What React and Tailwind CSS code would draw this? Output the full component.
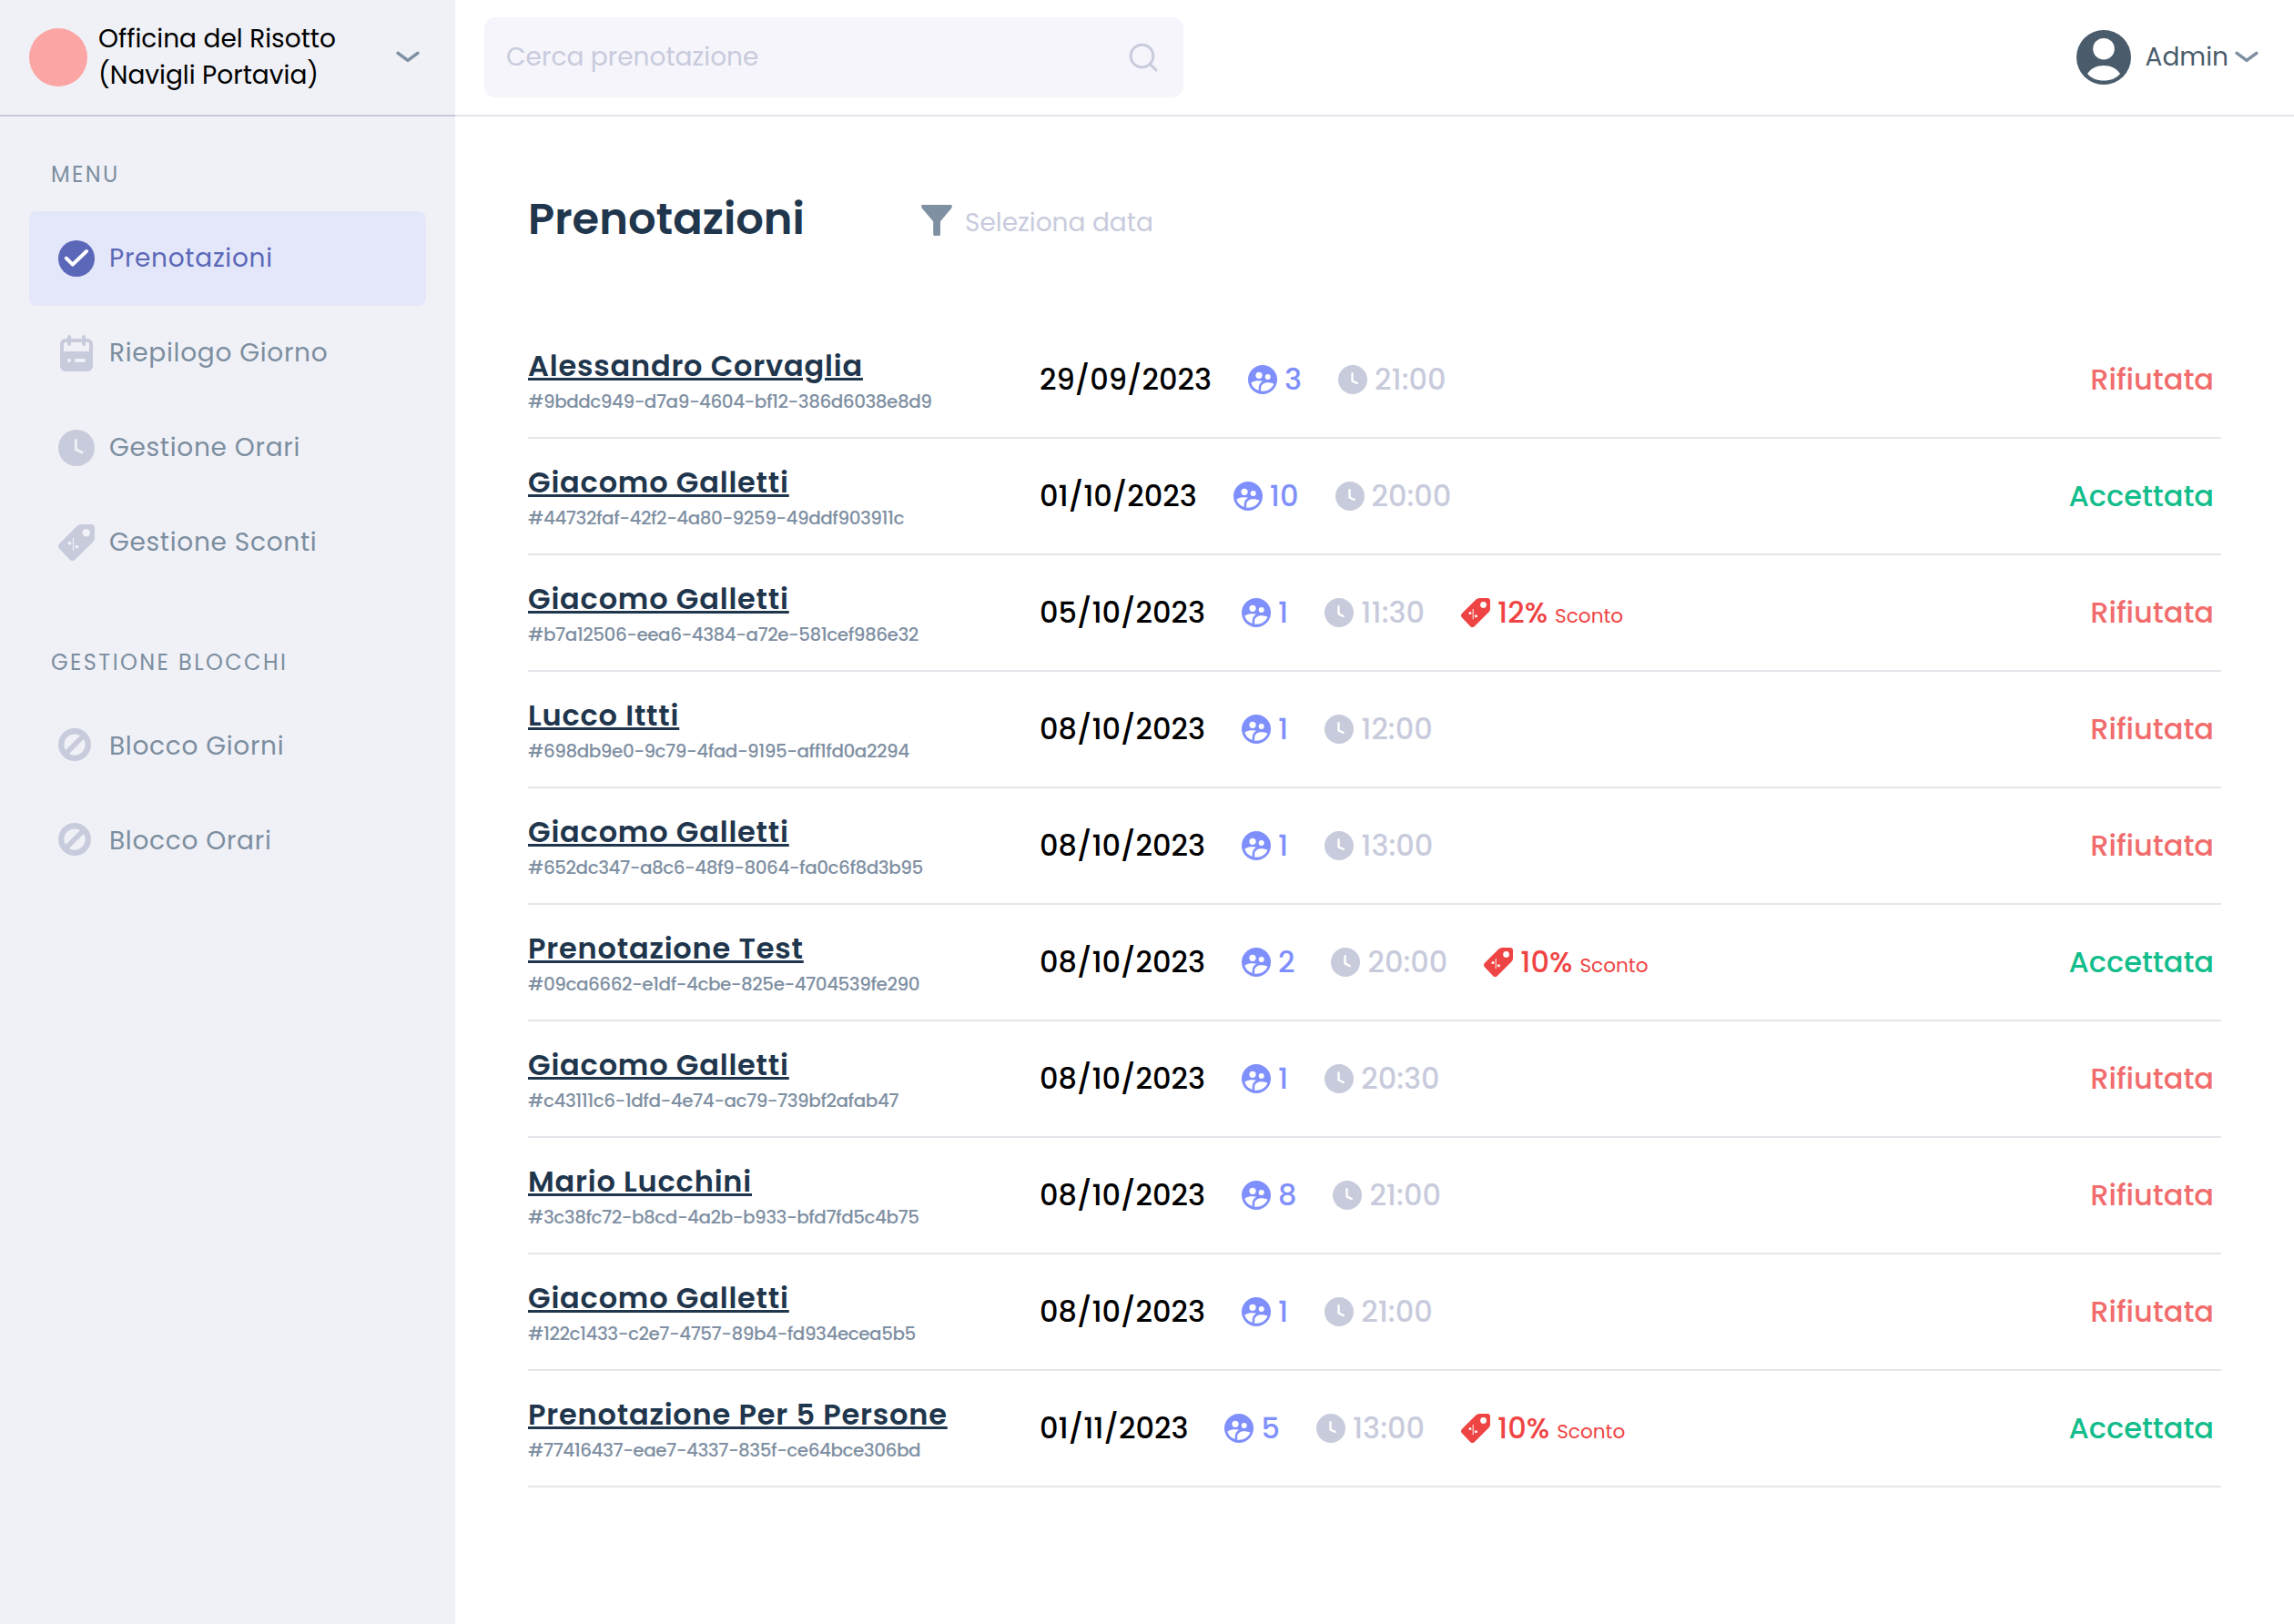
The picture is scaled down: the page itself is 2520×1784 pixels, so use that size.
const Chevron = () => (
  <svg viewBox="0 0 26 14" className="h-[14px] w-[26px] shrink-0" fill="none" stroke="#7f90a2" strokeWidth="3.6" strokeLinecap="round" strokeLinejoin="round">
    <path d="M2.2 2.4 13 10.4 23.8 2.4" />
  </svg>
);

const CheckCircle = () => (
  <svg viewBox="0 0 40 40" className="size-10">
    <circle cx="20" cy="20" r="20" fill="#5b67b8" />
    <path d="M8.800 19.600 15.800 26.600 31 12" fill="none" stroke="#fff" strokeWidth="4" strokeLinecap="round" strokeLinejoin="round" />
  </svg>
);

const Calendar = () => (
  <svg viewBox="0 0 40 40" className="size-10" fill="none">
    <rect x="2" y="4" width="36" height="36" rx="6" fill="#c8cbdc" />
    <path d="M6 10a2 2 0 0 1 2-2h24a2 2 0 0 1 2 2v8H6z" fill="#f0f1f7" />
    <path d="M12 2v8M28 2v8" stroke="#c8cbdc" strokeWidth="4" strokeLinecap="round" />
    <path d="M12 28h.01M20 28h8" stroke="#f0f1f7" strokeWidth="4" strokeLinecap="round" />
  </svg>
);

const Clock = ({ className, hand }) => (
  <svg viewBox="0 0 40 40" className={className} fill="none">
    <circle cx="20" cy="20" r="20" fill="#c8cbdc" />
    <path d="M19.400 11.500v10.200l6.600 3.300" stroke={hand} strokeWidth="3" strokeLinecap="round" strokeLinejoin="round" />
  </svg>
);

const Tag = ({ className, color, hole }) => (
  <svg viewBox="0 0 40 40" className={className}>
    <path d="M25.500 0H36a4 4 0 0 1 4 4v10.500a7 7 0 0 1-2 5L18.600 38.700a4.400 4.400 0 0 1-6 0L1.300 27a4.600 4.600 0 0 1 0-6L20.500 2a7 7 0 0 1 5-2z" fill={color} />
    <circle cx="30.700" cy="9.300" r="4.200" fill={hole} />
    <circle cx="12.500" cy="20.700" r="1.900" fill={hole} />
    <circle cx="20.500" cy="24.700" r="1.900" fill={hole} />
    <path d="M16.500 15v14" stroke={hole} strokeWidth="1.200" />
  </svg>
);

const Block = () => (
  <svg viewBox="0 0 36 36" className="size-9" fill="none" stroke="#c8cbdc" strokeWidth="6.400">
    <circle cx="18" cy="18" r="14.800" />
    <path d="M8.500 27.500 27.500 8.500" strokeWidth="5.400" />
  </svg>
);

const People = () => (
  <svg viewBox="0 0 32 32" className="size-8 shrink-0">
    <circle cx="16" cy="16" r="16" fill="#7f8ffb" />
    <circle cx="12" cy="11.300" r="3.600" fill="#fff" />
    <circle cx="21.700" cy="12.900" r="3" fill="#fff" />
    <path d="M3.400 19.500C5.500 17.900 9 17.300 12 17.300c1.500 0 3 .2 4.300.5-3 1.600-4.600 4-4.600 7.200v3C7.500 26.500 4.300 23.500 3.400 19.500z" fill="#fff" />
    <path d="M14.200 28.700V25c0-3.800 4-5.700 7.500-5.700 2.400 0 5 .5 6.700 1.500-1.900 5-7.300 8.600-14.200 7.900z" fill="#fff" />
  </svg>
);

const Avatar = () => (
  <svg viewBox="0 0 60 60" className="size-[60px] shrink-0">
    <circle cx="30" cy="30" r="30" fill="#4a5c6b" />
    <circle cx="30" cy="20.700" r="11.800" fill="#fff" />
    <path d="M12 48c4-6 10.500-9 18-9s14 3 18 9c-4 5-10.500 7.500-18 7.500S16 53 12 48z" fill="#fff" />
  </svg>
);

const Search = () => (
  <svg viewBox="0 0 32 32" className="size-8" fill="none" stroke="#c8cbdc" strokeWidth="3" strokeLinecap="round">
    <circle cx="14.500" cy="14.500" r="12.300" />
    <path d="m23.500 23.500 6.500 6.500" />
  </svg>
);

const Funnel = () => (
  <svg viewBox="0 0 34 34" className="size-[34px] shrink-0" fill="#7f90a2">
    <path d="M1.500 0h31a1.300 1.300 0 0 1 1.300 1.400c0 1.200-.4 2.200-1.200 3.100L21 18.200V32.500a1.400 1.400 0 0 1-1.400 1.400h-5A1.400 1.400 0 0 1 13.200 32.500V18.200L1.400 4.500C.6 3.600.2 2.600.2 1.400.2.500.7 0 1.500 0z" />
  </svg>
);

function NavItem({ icon, label, active }) {
  return (
    <a className={`mx-8 flex h-[104px] items-center rounded-lg pl-8 text-[28px] leading-10 tracking-wide ${active ? "bg-[#e4e7f9] text-[#5b67b8]" : "text-[#7c8e9f]"}`}>
      <span className="flex h-10 w-14 shrink-0 items-start">{icon}</span>
      {label}
    </a>
  );
}

function NavHeading({ children }) {
  return <div className="pl-14 text-2xl leading-8 tracking-widest text-[#7c8e9f]">{children}</div>;
}

const rows = [
  { name: "Alessandro Corvaglia", id: "#9bddc949-d7a9-4604-bf12-386d6038e8d9", date: "29/09/2023", guests: 3, time: "21:00" },
  { name: "Giacomo Galletti", id: "#44732faf-42f2-4a80-9259-49ddf903911c", date: "01/10/2023", guests: 10, time: "20:00", accepted: true },
  { name: "Giacomo Galletti", id: "#b7a12506-eea6-4384-a72e-581cef986e32", date: "05/10/2023", guests: 1, time: "11:30", discount: "12%" },
  { name: "Lucco Ittti", id: "#698db9e0-9c79-4fad-9195-aff1fd0a2294", date: "08/10/2023", guests: 1, time: "12:00" },
  { name: "Giacomo Galletti", id: "#652dc347-a8c6-48f9-8064-fa0c6f8d3b95", date: "08/10/2023", guests: 1, time: "13:00" },
  { name: "Prenotazione Test", id: "#09ca6662-e1df-4cbe-825e-4704539fe290", date: "08/10/2023", guests: 2, time: "20:00", discount: "10%", accepted: true },
  { name: "Giacomo Galletti", id: "#c43111c6-1dfd-4e74-ac79-739bf2afab47", date: "08/10/2023", guests: 1, time: "20:30" },
  { name: "Mario Lucchini", id: "#3c38fc72-b8cd-4a2b-b933-bfd7fd5c4b75", date: "08/10/2023", guests: 8, time: "21:00" },
  { name: "Giacomo Galletti", id: "#122c1433-c2e7-4757-89b4-fd934ecea5b5", date: "08/10/2023", guests: 1, time: "21:00" },
  { name: "Prenotazione Per 5 Persone", id: "#77416437-eae7-4337-835f-ce64bce306bd", date: "01/11/2023", guests: 5, time: "13:00", discount: "10%", accepted: true },
];

function Row({ name, id, date, guests, time, discount, accepted }) {
  return (
    <li className="flex h-32 items-center border-b-2 border-[#e3e7eb] text-[32px] leading-[48px] font-medium">
      <div className="w-[562px] shrink-0">
        <a className="block font-semibold tracking-wide text-[#1f364d] underline decoration-[3px] underline-offset-[2px]">{name}</a>
        <p className="text-xl leading-[30px] tracking-tight text-[#7f90a3]">{id}</p>
      </div>
      <div className="flex grow items-center gap-10">
        <span className="text-black">{date}</span>
        <div className="flex items-center gap-2 text-[#7f8ffb]">
          <People />
          {guests}
        </div>
        <div className="flex items-center gap-2 text-[#c8cbdc]">
          <Clock className="size-8 shrink-0" hand="#fff" />
          {time}
        </div>
        {discount && (
          <div className="flex items-center gap-2 text-[#ef4444]">
            <Tag className="size-8 shrink-0" color="#ef4444" hole="#fff" />
            <div className="flex items-baseline gap-2">
              <span>{discount}</span>
              <span className="text-[21.6px] leading-8 font-normal">Sconto</span>
            </div>
          </div>
        )}
      </div>
      <div className={`pr-2 ${accepted ? "text-[#12bd8b]" : "text-[#f16c6c]"}`}>{accepted ? "Accettata" : "Rifiutata"}</div>
    </li>
  );
}

export default function App() {
  return (
    <div className="flex h-[1784px] w-[2520px] overflow-hidden bg-white font-[Poppins,Inter,sans-serif]">
      <aside className="w-[500px] shrink-0 bg-[#f0f1f7]">
        <div className="flex h-32 items-center border-b-2 border-[#c5cadb] pr-[39px] pl-8">
          <div className="size-16 shrink-0 rounded-full bg-[#fca5a5]" />
          <div className="ml-3 grow text-[28px] leading-10 text-black">
            Officina del Risotto
            <br />
            (Navigli Portavia)
          </div>
          <Chevron />
        </div>
        <nav className="pt-12">
          <NavHeading>MENU</NavHeading>
          <div className="pt-6">
            <NavItem active icon={<CheckCircle />} label="Prenotazioni" />
            <NavItem icon={<Calendar />} label="Riepilogo Giorno" />
            <NavItem icon={<Clock className="size-10" hand="#f0f1f7" />} label="Gestione Orari" />
            <NavItem icon={<Tag className="size-10" color="#c8cbdc" hole="#f0f1f7" />} label="Gestione Sconti" />
          </div>
          <div className="pt-16">
            <NavHeading>GESTIONE BLOCCHI</NavHeading>
          </div>
          <div className="pt-6">
            <NavItem icon={<Block />} label="Blocco Giorni" />
            <NavItem icon={<Block />} label="Blocco Orari" />
          </div>
        </nav>
      </aside>
      <main className="grow">
        <header className="flex h-32 items-center justify-between border-b-2 border-[#e3e7eb] pr-[39px] pl-8">
          <div className="flex h-[88px] w-[768px] items-center justify-between rounded-xl bg-[#f5f5fb] pr-7 pl-6 text-[28px] leading-10 text-[#c8cbdc]">
            <span>Cerca prenotazione</span>
            <Search />
          </div>
          <div className="flex items-center text-[28px] leading-10 text-[#4a5c6b]">
            <Avatar />
            <span className="mr-[7px] ml-4">Admin</span>
            <Chevron />
          </div>
        </header>
        <section className="px-20">
          <div className="flex h-[226px] items-start pt-[77px]">
            <h1 className="w-[432px] text-5xl leading-[72px] font-semibold text-[#1f364d]">Prenotazioni</h1>
            <div className="flex items-start pt-5">
              <Funnel />
              <span className="ml-3.5 text-[28px] leading-10 text-[#c8cbdc]">Seleziona data</span>
            </div>
          </div>
          <ul>
            {rows.map((row) => (
              <Row key={row.id} {...row} />
            ))}
          </ul>
        </section>
      </main>
    </div>
  );
}
